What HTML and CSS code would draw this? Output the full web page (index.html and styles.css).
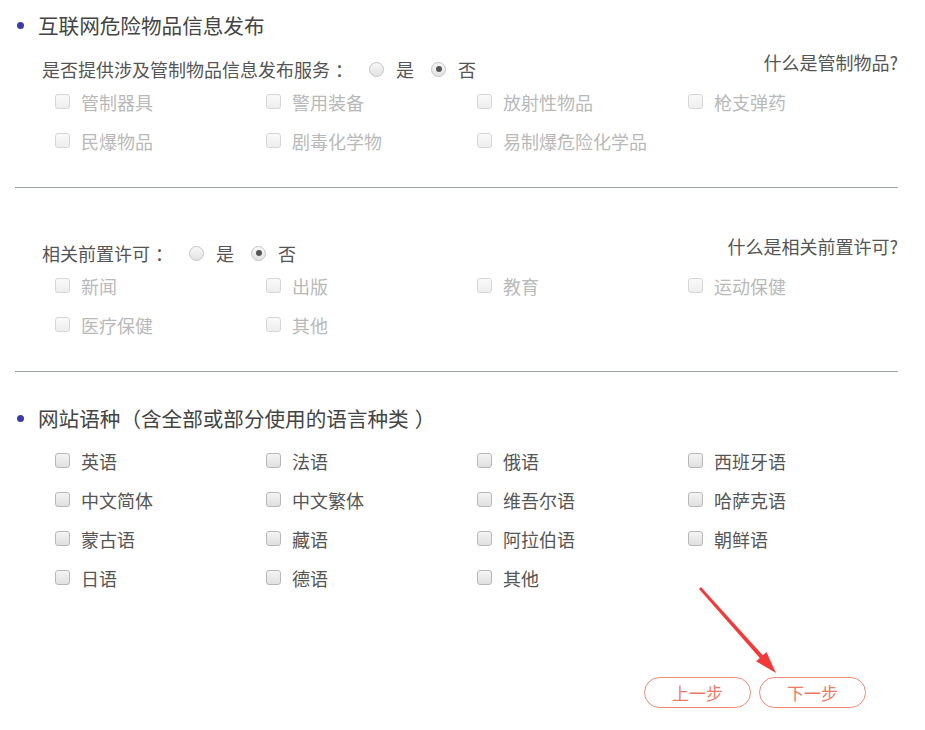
FILE: index.html
```html
<!DOCTYPE html>
<html lang="zh-CN">
<head>
    <meta charset="UTF-8">
    <meta name="viewport" content="width=device-width, initial-scale=1.0">
    <title>网站信息</title>
    <link rel="stylesheet" href="styles.css">
</head>
<body>

<div class="container">
    <!-- 互联网危险物品 -->
    <div class="section-title"><span class="dot"></span>互联网危险物品信息发布</div>

    <div class="question">
        <div class="question-left">
            <span class="question-label">是否提供涉及管制物品信息发布服务<span class="fw colon">：</span></span>
            <span class="radio"></span><span class="radio-text">是</span>
            <span class="radio checked"></span><span class="radio-text">否</span>
        </div>
        <a class="help-link">什么是管制物品?</a>
    </div>

    <div class="check-grid disabled">
        <div class="check-item"><span class="box"></span>管制器具</div>
        <div class="check-item"><span class="box"></span>警用装备</div>
        <div class="check-item"><span class="box"></span>放射性物品</div>
        <div class="check-item"><span class="box"></span>枪支弹药</div>
        <div class="check-item"><span class="box"></span>民爆物品</div>
        <div class="check-item"><span class="box"></span>剧毒化学物</div>
        <div class="check-item"><span class="box"></span>易制爆危险化学品</div>
    </div>

    <div class="divider"></div>

    <!-- 前置许可 -->
    <div class="question question-2">
        <div class="question-left">
            <span class="question-label">相关前置许可<span class="fw colon">：</span></span>
            <span class="radio"></span><span class="radio-text">是</span>
            <span class="radio checked"></span><span class="radio-text">否</span>
        </div>
        <a class="help-link">什么是相关前置许可?</a>
    </div>

    <div class="check-grid disabled">
        <div class="check-item"><span class="box"></span>新闻</div>
        <div class="check-item"><span class="box"></span>出版</div>
        <div class="check-item"><span class="box"></span>教育</div>
        <div class="check-item"><span class="box"></span>运动保健</div>
        <div class="check-item"><span class="box"></span>医疗保健</div>
        <div class="check-item"><span class="box"></span>其他</div>
    </div>

    <div class="divider"></div>

    <!-- 网站语种 -->
    <div class="section-title title-2"><span class="dot"></span>网站语种<span class="fw open">（</span>含全部或部分使用的语言种类<span class="fw close">）</span></div>

    <div class="check-grid lang-grid">
        <div class="check-item"><span class="box"></span>英语</div>
        <div class="check-item"><span class="box"></span>法语</div>
        <div class="check-item"><span class="box"></span>俄语</div>
        <div class="check-item"><span class="box"></span>西班牙语</div>
        <div class="check-item"><span class="box"></span>中文简体</div>
        <div class="check-item"><span class="box"></span>中文繁体</div>
        <div class="check-item"><span class="box"></span>维吾尔语</div>
        <div class="check-item"><span class="box"></span>哈萨克语</div>
        <div class="check-item"><span class="box"></span>蒙古语</div>
        <div class="check-item"><span class="box"></span>藏语</div>
        <div class="check-item"><span class="box"></span>阿拉伯语</div>
        <div class="check-item"><span class="box"></span>朝鲜语</div>
        <div class="check-item"><span class="box"></span>日语</div>
        <div class="check-item"><span class="box"></span>德语</div>
        <div class="check-item"><span class="box"></span>其他</div>
    </div>

    <div class="buttons">
        <button class="step-btn">上一步</button>
        <button class="step-btn">下一步</button>
    </div>
</div>

<!-- 标注箭头 -->
<svg class="arrow" width="925" height="730" viewBox="0 0 925 730">
    <polygon fill="#f23a3a" points="701,587 762.8,655.3 766.5,651.9 776,673 756.1,661.3 759.8,657.9 699,589"/>
</svg>

</body>
</html>
```

FILE: styles.css
```css
body {
    margin: 0;
    padding: 0;
    background-color: #fff;
    font-family: "Noto Sans CJK SC", "Microsoft YaHei", sans-serif;
    color: #555;
}
.container {
    width: 883px;
    margin-left: 15px;
    padding-top: 10px;
}
.section-title {
    display: flex;
    align-items: center;
    height: 30px;
    line-height: 30px;
    font-size: 20.6px;
    color: #444;
}
.title-2 {
    margin-top: 31px;
}
.fw {
    display: inline-block;
    width: 1em;
}
.fw.close {
    transform: translateX(6px);
}
.fw.colon {
    transform: translateX(5px);
}
.dot {
    width: 7px;
    height: 7px;
    border-radius: 50%;
    background-color: #383ea6;
    margin-left: 2px;
    margin-right: 14px;
}
.question {
    display: flex;
    justify-content: space-between;
    align-items: flex-start;
    margin-top: 16px;
    padding-left: 27px;
}
.question-2 {
    margin-top: 52px;
}
.question-left {
    display: flex;
    align-items: center;
    height: 26px;
    font-size: 18px;
}
.question-label {
    margin-right: 21px;
}
.radio {
    width: 13px;
    height: 13px;
    border: 1px solid #c4c4c4;
    border-radius: 50%;
    background: linear-gradient(#f8f8f8, #e2e2e2);
    display: flex;
    align-items: center;
    justify-content: center;
}
.radio.checked::after {
    content: "";
    width: 6px;
    height: 6px;
    border-radius: 50%;
    background-color: #555;
}
.radio-text {
    margin-left: 12px;
    margin-right: 17px;
}
.help-link {
    font-size: 18px;
    line-height: 16px;
    margin-top: -2px;
    color: #555;
    cursor: pointer;
}
.check-grid {
    display: grid;
    grid-template-columns: repeat(4, 211px);
    grid-auto-rows: 39px;
    padding-left: 40px;
}
.lang-grid {
    margin-top: 8px;
}
.check-item {
    display: flex;
    align-items: center;
    font-size: 18px;
    color: #555;
}
.box {
    width: 13px;
    height: 13px;
    border: 1px solid #b8b8b8;
    border-radius: 3px;
    background: linear-gradient(#f4f4f4, #e0e0e0);
    margin-right: 11px;
}
.disabled .check-item {
    color: #b9b9b9;
}
.disabled .box {
    border-color: #d6d6d6;
    background: linear-gradient(#f9f9f9, #eeeeee);
}
.divider {
    height: 1px;
    background-color: #9ea2b3;
    margin-top: 27px;
}
.buttons {
    display: flex;
    justify-content: flex-end;
    gap: 8px;
    margin-top: 80px;
    padding-right: 32px;
}
.step-btn {
    width: 107px;
    height: 31px;
    border: 1px solid #f08b77;
    border-radius: 16px;
    background-color: #fff;
    color: #ee7a63;
    font-family: "Noto Sans CJK SC", sans-serif;
    font-size: 17px;
    cursor: pointer;
}
.arrow {
    position: absolute;
    left: 0;
    top: 0;
    pointer-events: none;
}
```
